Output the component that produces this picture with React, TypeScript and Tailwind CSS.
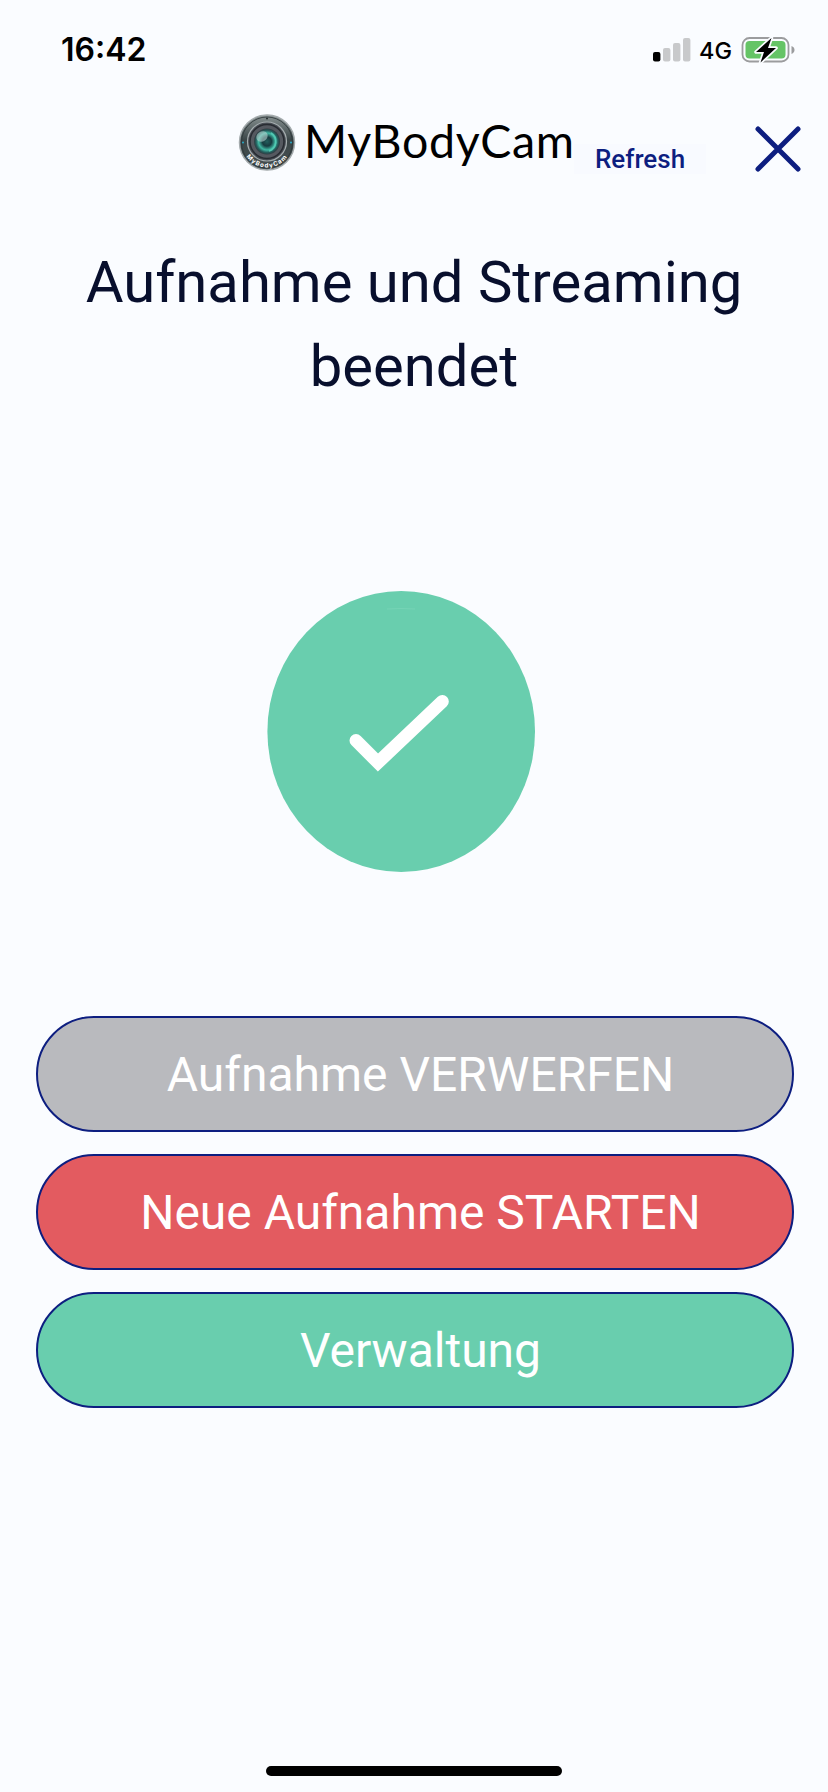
import clsx from "clsx";

interface ActionButtonProps {
  label: string;
  className: string;
}

const ActionButton = ({ label, className }: ActionButtonProps) => (
  <button
    className={clsx(
      "h-[116px] w-full rounded-full border-2 border-[#0d1e80] pt-[2px] pl-[11px] text-5xl text-white whitespace-nowrap",
      className
    )}
  >
    {label}
  </button>
);

const StatusBar = () => (
  <div className="flex h-[100px] items-center justify-between pr-[33px] pl-[61px] text-black">
    <span className="font-[Inter,sans-serif] text-[32px] leading-none font-semibold">16:42</span>
    <div className="flex items-center">
      <svg width="38" height="24" viewBox="0 0 38 24" aria-hidden="true">
        <rect x="0" y="14" width="7.4" height="9.5" rx="2" fill="#000" />
        <rect x="10" y="10" width="7.4" height="13.5" rx="2" fill="#c8c9cb" />
        <rect x="20" y="5" width="7.4" height="18.5" rx="2" fill="#c8c9cb" />
        <rect x="30" y="0" width="7.4" height="23.5" rx="2" fill="#c8c9cb" />
      </svg>
      <span className="ml-2 w-[33px] pt-px font-[Inter,sans-serif] text-[23.5px] leading-none font-medium whitespace-nowrap">4G</span>
      <svg className="ml-[9px]" width="54" height="28" viewBox="0 0 54 28" aria-hidden="true">
        <rect x="1.5" y="2" width="46" height="23.5" rx="7" fill="none" stroke="#9b9c9e" strokeWidth="1.8" />
        <path d="M50.5 10v8c2-.7 3-2.3 3-4s-1-3.3-3-4z" fill="#9b9c9e" />
        <rect x="4.5" y="5" width="40" height="17.5" rx="4" fill="#65c466" />
        <path
          d="M30.5 2 15 16h8L19.5 26.5 35 12h-8z"
          fill="#000"
          stroke="#fafcff"
          strokeWidth="3.5"
          strokeLinejoin="round"
          paintOrder="stroke"
        />
      </svg>
    </div>
  </div>
);

const LensLogo = () => (
  <svg className="shrink-0" width="58" height="58" viewBox="0 0 58 58" aria-hidden="true">
    <defs>
      <linearGradient id="rim" x1="0" y1="0" x2="0" y2="1">
        <stop offset="0" stopColor="#899393" />
        <stop offset="0.45" stopColor="#3b4648" />
        <stop offset="1" stopColor="#465052" />
      </linearGradient>
      <radialGradient id="glass">
        <stop offset="0" stopColor="#245f5d" />
        <stop offset="0.35" stopColor="#173b40" />
        <stop offset="0.65" stopColor="#41b9a4" />
        <stop offset="0.85" stopColor="#255d5c" />
        <stop offset="1" stopColor="#313a41" />
      </radialGradient>
      <path id="badge" d="M5.5 37A25 25 0 0 0 52.5 37" />
    </defs>
    <circle cx="29" cy="28.5" r="27.5" fill="url(#rim)" stroke="#a4abad" strokeWidth="1.5" />
    <circle cx="29" cy="28.5" r="25.5" fill="none" stroke="#2b3436" strokeWidth="0.8" />
    <circle cx="29" cy="27.5" r="19.5" fill="#484d54" stroke="#a5adaf" strokeWidth="1.2" />
    <circle cx="29" cy="27.5" r="17" fill="#555960" stroke="#282c32" strokeWidth="1.5" />
    <circle cx="29" cy="27.5" r="13" fill="url(#glass)" />
    <path d="M33 19a10 10 0 0 1-2 18" fill="none" stroke="#51c9b2" strokeWidth="1.6" />
    <ellipse cx="24" cy="22.5" rx="6" ry="5" fill="#b5d4d1" opacity="0.6" transform="rotate(-35 24 22.5)" />
    <circle cx="29" cy="4.5" r="1" fill="#252d2f" />
    <circle cx="5" cy="28.5" r="1" fill="#28aac8" />
    <circle cx="53" cy="28.5" r="1" fill="#28aac8" />
    <text fill="#fff" fontFamily="Inter, sans-serif" fontSize="6.2" fontWeight="700" letterSpacing="1">
      <textPath href="#badge" startOffset="50%" textAnchor="middle">
        MyBodyCam
      </textPath>
    </text>
  </svg>
);

const Header = () => (
  <header className="flex h-[86px] items-start pl-[238px]">
    <div className="mt-[14px] flex h-[58px] items-center">
      <LensLogo />
      <span className="ml-[8px] w-[270px] pb-[6px] font-[Lato,sans-serif] text-[46.5px] leading-[56px] tracking-[0.7px] whitespace-nowrap text-black">
        MyBodyCam
      </span>
    </div>
    <button className="mt-[44px] h-[30px] w-[132px] bg-[#f8faff] pt-px text-[26px] leading-[29px] font-medium text-[#0d1e80]">
      Refresh
    </button>
    <button className="mt-[26px] ml-[49px]" aria-label="Schließen">
      <svg width="46" height="46" viewBox="0 0 46 46" aria-hidden="true">
        <path d="M3 3l40 40M43 3L3 43" stroke="#0d1e80" strokeWidth="5" strokeLinecap="round" />
      </svg>
    </button>
  </header>
);

const App = () => (
  <div className="flex h-[1792px] w-[828px] flex-col bg-[#fafcff] font-[Roboto,sans-serif]">
    <StatusBar />
    <Header />
    <main className="flex flex-col">
      <h1 className="mt-[54px] text-center text-[58px] leading-[84px] text-[#080f2d]">
        Aufnahme und Streaming
        <br />
        beendet
      </h1>
      <svg className="mt-[183px] ml-[267px]" width="268" height="281" viewBox="0 0 268 281" aria-hidden="true">
        <ellipse cx="134.2" cy="140.5" rx="133.8" ry="140.5" fill="#69ceae" />
        <path d="M120 18q14-1 28 0" fill="none" stroke="#7bd5b9" strokeWidth="0.7" />
        <path d="M89 149.5l22 22L175.3 110.5" fill="none" stroke="#fff" strokeWidth="13" strokeLinecap="round" />
      </svg>
      <div className="mt-[144px] flex flex-col gap-[22px] pr-[34px] pl-9">
        <ActionButton label="Aufnahme VERWERFEN" className="bg-[#b9babe]" />
        <ActionButton label="Neue Aufnahme STARTEN" className="bg-[#e35b60]" />
        <ActionButton label="Verwaltung" className="bg-[#69ceae]" />
      </div>
    </main>
    <div className="mx-auto mt-auto mb-4 h-[10px] w-[296px] rounded-full bg-black" />
  </div>
);

export default App;
